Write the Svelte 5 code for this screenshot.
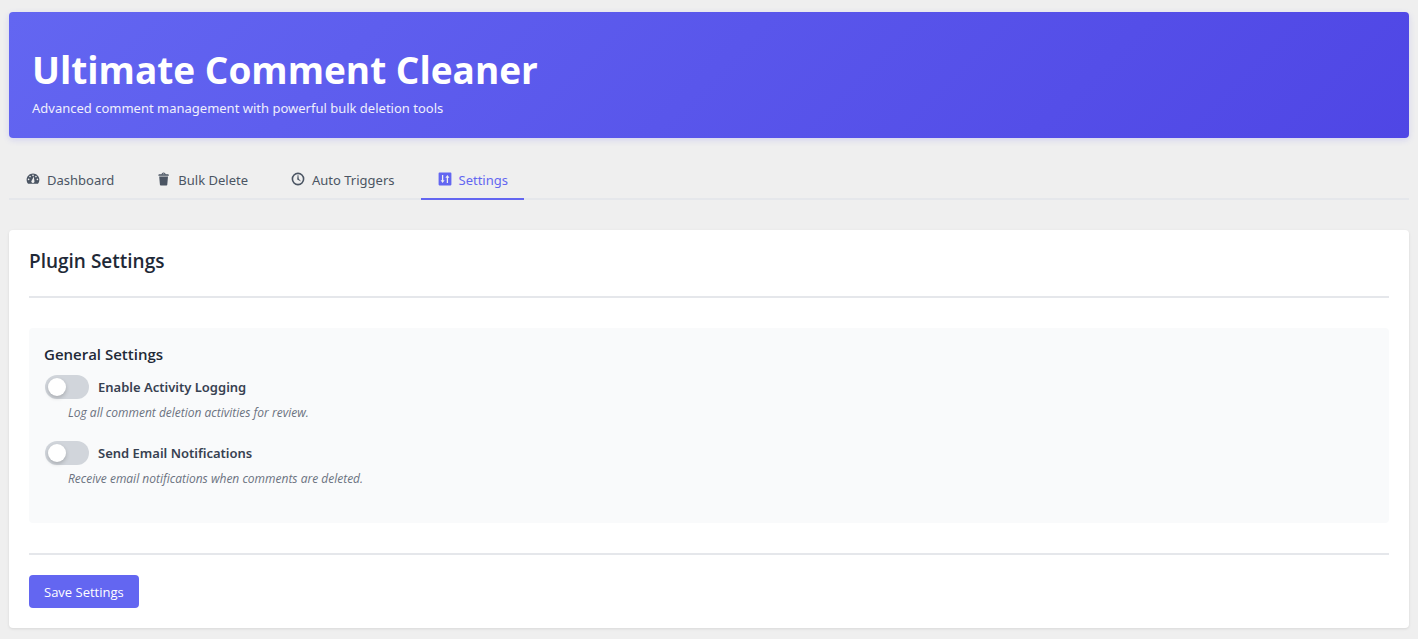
<script lang="ts">
	interface Tab {
		id: string;
		label: string;
		icon: string;
	}

	const tabs: Tab[] = [
		{
			id: 'dashboard',
			label: 'Dashboard',
			icon: 'M3.800 16h12.400A7.900 7.900 0 0 0 18 11c0-4.400-3.600-8-8-8s-8 3.600-8 8c0 1.900.7 3.650 1.800 5zM10 4.500a1 1 0 1 1 0 2 1 1 0 0 1 0-2zM6.300 6a1 1 0 1 1 0 2 1 1 0 0 1 0-2zM13.700 6a1 1 0 1 1 0 2 1 1 0 0 1 0-2zM4.500 9.500a1 1 0 1 1 0 2 1 1 0 0 1 0-2zM15.500 9.500a1 1 0 1 1 0 2 1 1 0 0 1 0-2zM8.600 11.500 11 7l.7 5.200a2 2 0 1 1-3.100-.7z'
		},
		{
			id: 'bulk-delete',
			label: 'Bulk Delete',
			icon: 'M12 4h3c.6 0 1 .4 1 1v1H3V5c0-.6.5-1 1-1h3c.2-1.1 1.300-2 2.500-2s2.300.9 2.500 2zM8 4h3c-.2-.6-.9-1-1.500-1S8.200 3.400 8 4zM4 7h11l-.9 10.100c0 .5-.5.9-1 .9H5.900c-.5 0-.9-.4-1-.9z'
		},
		{
			id: 'auto-triggers',
			label: 'Auto Triggers',
			icon: 'M10 2a8 8 0 1 1 0 16 8 8 0 0 1 0-16zm0 2a6 6 0 1 0 0 12 6 6 0 0 0 0-12zM9 10l.6-5h.8l.6 4.800L14 13l-4.500-2.100A1 1 0 0 1 9 10z'
		},
		{
			id: 'settings',
			label: 'Settings',
			icon: 'M3 2h14a1 1 0 0 1 1 1v14a1 1 0 0 1-1 1H3a1 1 0 0 1-1-1V3a1 1 0 0 1 1-1zM6.200 5v6.500H4.500L7 15l2.500-3.500H7.800V5zM13 5l-2.500 3.500h1.700V15h1.600V8.500h1.700z'
		}
	];

	let activeTab = $state('settings');

	let settings = $state([
		{
			id: 'activity-logging',
			label: 'Enable Activity Logging',
			description: 'Log all comment deletion activities for review.',
			enabled: false
		},
		{
			id: 'email-notifications',
			label: 'Send Email Notifications',
			description: 'Receive email notifications when comments are deleted.',
			enabled: false
		}
	]);
</script>

<div class="wrap">
	<header class="header">
		<h1>Ultimate Comment Cleaner</h1>
		<p>Advanced comment management with powerful bulk deletion tools</p>
	</header>

	<nav class="tabs">
		{#each tabs as tab (tab.id)}
			<a
				href="#{tab.id}"
				class="tab"
				class:active={activeTab === tab.id}
				onclick={() => (activeTab = tab.id)}
			>
				<svg viewBox="0 0 20 20" width="16" height="16" aria-hidden="true">
					<path d={tab.icon} fill="currentColor" fill-rule="evenodd" />
				</svg>
				<span>{tab.label}</span>
			</a>
		{/each}
	</nav>

	<main class="card">
		<h2>Plugin Settings</h2>

		<form onsubmit={(e) => e.preventDefault()}>
			<section class="section">
				<h3>General Settings</h3>
				{#each settings as setting (setting.id)}
					<div class="setting">
						<label class="toggle" for={setting.id}>
							<input
								type="checkbox"
								id={setting.id}
								aria-describedby="{setting.id}-description"
								bind:checked={setting.enabled}
							/>
							<span>{setting.label}</span>
						</label>
						<p id="{setting.id}-description">{setting.description}</p>
					</div>
				{/each}
			</section>

			<div class="actions">
				<button type="submit">Save Settings</button>
			</div>
		</form>
	</main>
</div>

<style>
	:global(body) {
		margin: 0;
		background: #efefef;
	}

	.wrap {
		padding: 12px 9px 11px;
		font-family: 'Segoe UI', 'Noto Sans', 'Open Sans', sans-serif;
		font-size: 13px;
		line-height: 20px;
		color: #374151;
	}

	h1,
	h2,
	h3,
	p {
		margin: 0;
	}

	h1,
	h2,
	h3,
	.setting p,
	button {
		font-family: 'Segoe UI', 'Open Sans', sans-serif;
	}

	.header {
		padding: 32px 23px 20px;
		border-radius: 4px;
		background: linear-gradient(135deg, #6366f1 0%, #4f46e5 100%);
		box-shadow: 0 2px 6px rgba(99, 102, 241, 0.2);
		color: #fff;
	}

	.header h1 {
		margin-bottom: 2px;
		font-size: 37px;
		font-weight: 700;
		line-height: 52px;
	}

	.header p {
		opacity: 0.9;
	}

	.tabs {
		display: flex;
		gap: 10px;
		margin: 22px 0 30px;
		border-bottom: 2px solid #e5e7eb;
	}

	.tab {
		display: flex;
		align-items: center;
		gap: 6px;
		margin-bottom: -2px;
		padding: 10px 16px 8px;
		border-bottom: 2px solid transparent;
		color: #4b5563;
		text-decoration: none;
	}

	.tab svg {
		margin-bottom: 2px;
	}

	.tab.active {
		border-bottom-color: #6366f1;
		color: #6366f1;
	}

	.card {
		padding: 16px 20px 20px;
		border-radius: 4px;
		background: #fff;
		box-shadow: 0 1px 3px rgba(0, 0, 0, 0.1);
	}

	.card h2 {
		margin-bottom: 30px;
		padding-bottom: 20px;
		border-bottom: 2px solid #e5e7eb;
		font-size: 19px;
		font-weight: 600;
		line-height: 30px;
		color: #1f2937;
	}

	.section {
		margin-bottom: 30px;
		padding: 15px 15px 16px;
		border-radius: 4px;
		background: #f9fafb;
	}

	.section h3 {
		margin-bottom: 10px;
		font-size: 15px;
		font-weight: 600;
		line-height: 22px;
		color: #1f2937;
	}

	.setting {
		margin-bottom: 19px;
	}

	.setting p {
		margin-top: 5px;
		padding-left: 24px;
		font-size: 12px;
		font-style: italic;
		line-height: 18px;
		color: #6b7280;
	}

	.toggle {
		display: flex;
		align-items: center;
		gap: 9px;
		font-weight: 600;
		line-height: 24px;
		cursor: pointer;
	}

	.toggle input {
		display: flex;
		align-items: center;
		box-sizing: border-box;
		width: 44px;
		height: 24px;
		margin: 0 0 0 1px;
		padding: 3px;
		border-radius: 12px;
		background: #d1d5db;
		appearance: none;
		cursor: pointer;
		transition: background 0.2s;
	}

	.toggle input::before {
		content: '';
		width: 18px;
		height: 18px;
		border-radius: 50%;
		background: #fff;
		box-shadow: 0 2px 4px rgba(0, 0, 0, 0.2);
		transition: transform 0.2s;
	}

	.toggle input:checked {
		background: #6366f1;
	}

	.toggle input:checked::before {
		transform: translateX(20px);
	}

	.actions {
		padding-top: 20px;
		border-top: 2px solid #e5e7eb;
	}

	button {
		display: block;
		padding: 7px 15px 6px;
		border: 0;
		border-radius: 4px;
		background: #6366f1;
		color: #fff;
		font-size: 13px;
		line-height: 20px;
		cursor: pointer;
	}

	button:hover {
		background: #4f46e5;
	}
</style>
